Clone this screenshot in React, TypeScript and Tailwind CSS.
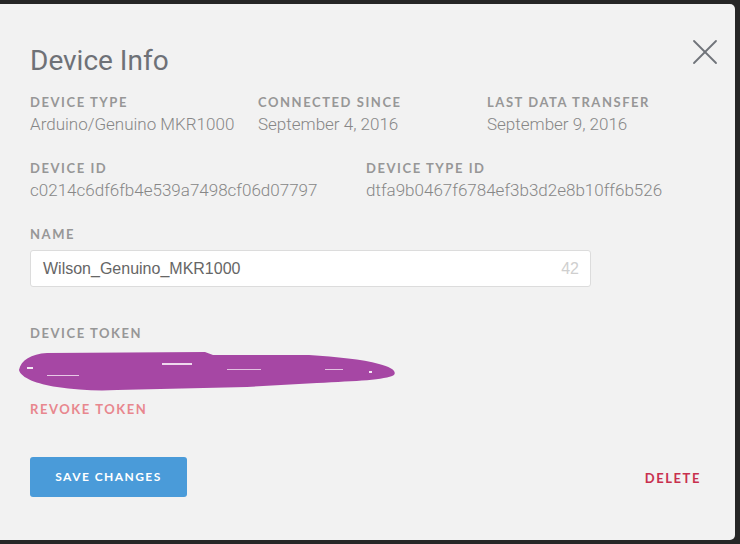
import { X } from "lucide-react";

const label =
  "font-['Lato',sans-serif] text-[13px] font-bold uppercase tracking-[0.12em] text-[#979797] leading-[16px]";
const value =
  "font-['Roboto',sans-serif] text-[17px] font-light text-[#878787] leading-[20px] mt-[4px]";

function Field({ name, val, w }: { name: string; val: string; w: string }) {
  return (
    <div className={`${w} shrink-0`}>
      <div className={label}>{name}</div>
      <div className={value}>{val}</div>
    </div>
  );
}

// The redacted token scribble.
function Scribble() {
  return (
    <svg width="380" height="42" viewBox="0 0 380 42" className="-ml-[13px] block">
      <path
        d="M2 20 C4 10 14 4 30 3 L188 2 L196 5 L292 5 C320 7 345 9 362 14 C374 17 380 21 377 25 C368 30 340 31 300 33 L230 37 L100 40 C80 41 60 40 40 37 C20 34 4 28 2 20 Z"
        fill="#a647a4"
      />
      <rect x="10" y="17" width="6" height="2" fill="#f4e8f4" />
      <rect x="30" y="25" width="32" height="1" fill="#e7c9e6" />
      <rect x="145" y="13" width="30" height="2" fill="#efd9ee" />
      <rect x="210" y="19" width="34" height="1" fill="#e2c2e1" />
      <rect x="308" y="19" width="18" height="1" fill="#e2c2e1" />
      <rect x="352" y="21" width="3" height="2" fill="#f4e8f4" />
    </svg>
  );
}

export default function App() {
  return (
    <div className="h-[544px] w-[740px] bg-[#262626] pt-[4px] pr-[5px] pb-[4px]">
      <div className="relative flex h-full flex-col rounded-r-[5px] bg-[#f2f2f2] px-[30px] pt-[41px]">
        <button className="absolute right-[8px] top-[26px] text-[#70747a]">
          <X className="h-[44px] w-[44px]" strokeWidth={1} />
        </button>

        <h2 className="font-['Roboto',sans-serif] text-[28px] font-normal leading-[32px] text-[#6e7177]">
          Device Info
        </h2>

        <div className="mt-[17px] flex">
          <Field w="w-[228px]" name="Device Type" val="Arduino/Genuino MKR1000" />
          <Field w="w-[229px]" name="Connected Since" val="September 4, 2016" />
          <Field w="w-[218px]" name="Last Data Transfer" val="September 9, 2016" />
        </div>

        <div className="mt-[26px] flex">
          <Field w="w-[336px]" name="Device ID" val="c0214c6df6fb4e539a7498cf06d07797" />
          <Field w="w-[336px]" name="Device Type ID" val="dtfa9b0467f6784ef3b3d2e8b10ff6b526" />
        </div>

        <div className="mt-[26px]">
          <div className={label}>Name</div>
          <div className="mt-[8px] flex h-[37px] w-[561px] items-center justify-between rounded-[3px] border border-[#dcdcdc] bg-white pl-[12px] pr-[11px]">
            <span className="font-['Liberation_Sans',sans-serif] text-[16px] text-[#666]">
              Wilson_Genuino_MKR1000
            </span>
            <span className="font-['Liberation_Sans',sans-serif] text-[16px] text-[#cfcfcf]">42</span>
          </div>
        </div>

        <div className="mt-[38px]">
          <div className={label}>Device Token</div>
          <div className="mt-[9px]">
            <Scribble />
          </div>
          <div className={`${label} mt-[9px] !text-[#e8878e]`}>Revoke Token</div>
        </div>

        <div className="mt-[40px] flex items-center justify-between pr-[4px]">
          <button className="h-[40px] w-[157px] rounded-[3px] bg-[#4a9bd9] font-['Lato',sans-serif] text-[12px] font-bold uppercase tracking-[0.12em] text-white">
            Save Changes
          </button>
          <span className="mt-[4px] font-['Lato',sans-serif] text-[13px] font-bold uppercase tracking-[0.12em] text-[#c8304e]">
            Delete
          </span>
        </div>
      </div>
    </div>
  );
}
